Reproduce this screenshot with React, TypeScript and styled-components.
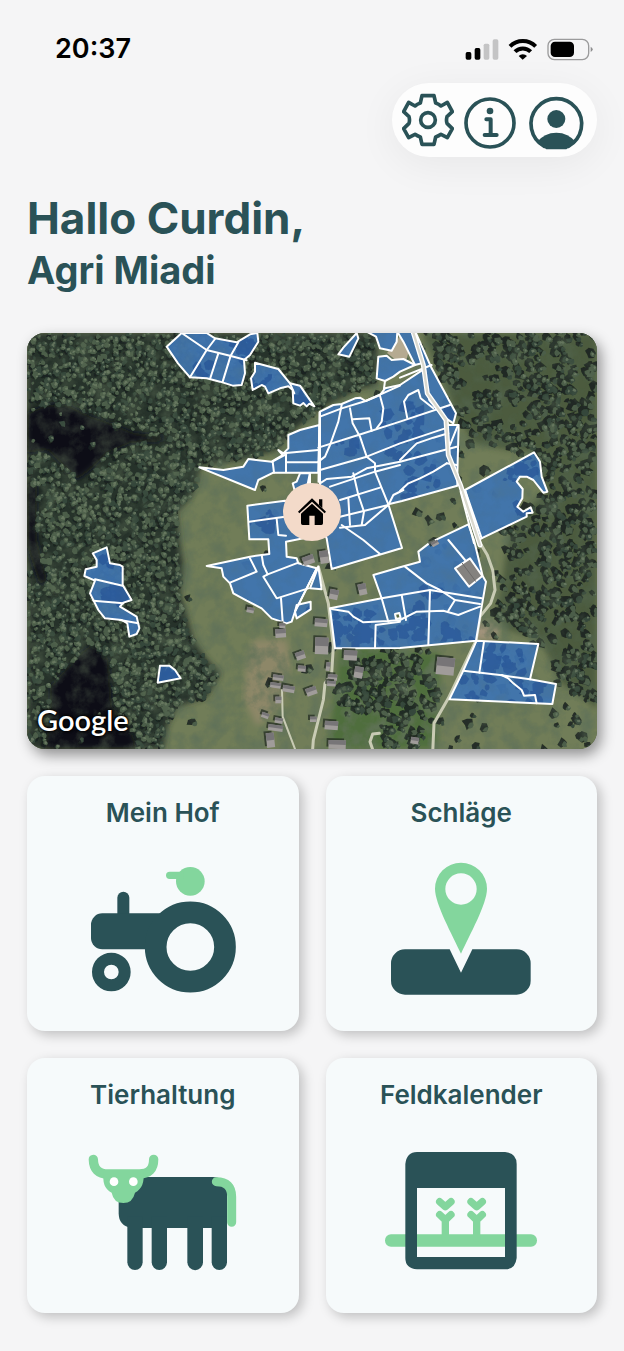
import React from 'react';
import styled, { createGlobalStyle } from 'styled-components';

const DARK = '#2a5257';
const MINT = '#83d69d';

const GlobalStyle = createGlobalStyle`
  *, *::before, *::after { box-sizing: border-box; }
  body {
    margin: 0;
    background: #f5f5f6;
    color: ${DARK};
    font-family: Inter, "Liberation Sans", sans-serif;
    -webkit-font-smoothing: antialiased;
  }
`;

const Screen = styled.div`
  display: flex;
  flex-direction: column;
  padding-bottom: 38px;
`;

const StatusBar = styled.div`
  display: flex;
  align-items: center;
  justify-content: space-between;
  height: 64px;
  padding: 34px 30px 0 55px;
  color: #000;
`;

const Clock = styled.time`
  font-size: 27px;
  line-height: 30px;
  font-weight: 600;
`;

const StatusIcons = styled.svg`
  width: 129px;
  height: 24px;
`;

const Header = styled.header`
  display: flex;
  justify-content: flex-end;
  padding: 19px 27px 0;
`;

const ActionPill = styled.nav`
  display: flex;
  align-items: center;
  gap: 10px;
  height: 74px;
  padding: 0 11px 0 10px;
  border-radius: 37px;
  background: #fdfdfd;
  box-shadow: 0 8px 40px rgba(0, 0, 0, 0.06);
`;

const IconButton = styled.button<{ $width: number }>`
  display: block;
  width: ${(p) => p.$width}px;
  height: 60px;
  padding: 0;
  border: 0;
  background: none;
  color: ${DARK};
  cursor: pointer;

  svg {
    display: block;
    width: 100%;
    height: 100%;
    fill: none;
    stroke: currentColor;
    stroke-width: 11;
    stroke-linejoin: round;
    stroke-linecap: round;
  }
`;

const Main = styled.main`
  display: flex;
  flex-direction: column;
  padding: 35px 27px 0;
`;

const Greeting = styled.h1`
  margin: 0;
  font-size: 44px;
  line-height: 52px;
  font-weight: 700;
`;

const FarmName = styled.p`
  margin: 0 0 37px;
  font-size: 38px;
  line-height: 52px;
  font-weight: 700;
`;

const MapCard = styled.section`
  border-radius: 18px;
  margin-bottom: 27px;
  box-shadow: 4px 6px 14px rgba(0, 0, 0, 0.42);
`;

const MapView = styled.div`
  position: relative;
  aspect-ratio: 570 / 416;
  border-radius: 18px;
  overflow: hidden;
  background: #37452f;
`;

const MapDrawing = styled.svg`
  display: block;
  width: 100%;
  height: 100%;
`;

const FarmMarker = styled.button`
  position: absolute;
  left: 50%;
  top: 43%;
  width: 58px;
  height: 58px;
  padding: 0;
  border: 0;
  border-radius: 50%;
  background: #f3dac9;
  transform: translate(-50%, -50%);
  cursor: pointer;

  svg {
    display: block;
    width: 58px;
    height: 58px;
  }
`;

const MapCredit = styled.span`
  position: absolute;
  left: 10px;
  bottom: 13px;
  color: #fff;
  font-family: Lato, "Liberation Sans", sans-serif;
  font-size: 29px;
  line-height: 32px;
  font-weight: 600;
  text-shadow: 0 0 3px #000, 0 0 3px #000, 0 0 4px #000;
`;

const Tiles = styled.nav`
  display: grid;
  grid-template-columns: 1fr 1fr;
  gap: 27px;
`;

const Tile = styled.a`
  display: flex;
  flex-direction: column;
  align-items: center;
  min-height: 255px;
  padding: 21px 12px 31px;
  border-radius: 18px;
  background: #f6fafb;
  color: inherit;
  text-decoration: none;
  box-shadow: 4px 4px 12px rgba(0, 0, 0, 0.22);
`;

const TileTitle = styled.h2`
  margin: 0 0 31px;
  font-size: 26px;
  line-height: 32px;
  font-weight: 600;
`;

const TileIcon = styled.svg`
  width: 153px;
  height: 140px;
`;

/* ---------- Map texture ---------- */

type Point = [number, number];

const seeded = (seed: number) => () => {
  seed = (seed * 1664525 + 1013904223) % 4294967296;
  return seed / 4294967296;
};

const inside = (x: number, y: number, poly: Point[]) => {
  let hit = false;
  for (let i = 0, j = poly.length - 1; i < poly.length; j = i++) {
    const [xi, yi] = poly[i];
    const [xj, yj] = poly[j];
    if (yi > y !== yj > y && x < ((xj - xi) * (y - yi)) / (yj - yi) + xi) hit = !hit;
  }
  return hit;
};

const toPoints = (poly: Point[]) => poly.map((p) => p.join(',')).join(' ');

const blob = (x: number, y: number, r: number, rand: () => number) => {
  const n = 7;
  let d = '';
  for (let i = 0; i < n; i++) {
    const a = (i / n) * Math.PI * 2;
    const k = r * (0.6 + rand() * 0.8);
    d += `${i ? 'L' : 'M'}${Math.round(x + Math.cos(a) * k)} ${Math.round(y + Math.sin(a) * k)}`;
  }
  return d + 'Z';
};

const WEST_FOREST: Point[] = [
  [0, 0], [1050, 0], [1049, 156], [999, 166], [879, 226], [784, 306], [749, 351], [659, 376],
  [519, 400], [510, 450], [489, 496], [449, 536], [455, 590], [459, 636], [470, 700], [459, 781],
  [480, 850], [499, 921], [540, 980], [579, 1021], [539, 1091], [449, 1121], [420, 1180],
  [409, 1248], [0, 1248],
];

const EAST_FOREST: Point[] = [
  [1185, 0], [1710, 0], [1710, 1130], [1650, 1080], [1599, 1051], [1570, 980], [1539, 921],
  [1440, 890], [1409, 840], [1425, 751], [1440, 640], [1459, 566], [1559, 476], [1519, 356],
  [1440, 350], [1340, 330], [1290, 250], [1250, 140],
];

const SOUTH_WOOD: Point[] = [
  [990, 990], [1100, 965], [1200, 980], [1230, 1040], [1240, 1100], [1200, 1180], [1190, 1248],
  [1080, 1248], [1060, 1130], [960, 1150], [920, 1080],
];

const RAVINES: Point[][] = [
  [[0, 240], [60, 215], [120, 215], [190, 250], [250, 270], [320, 300], [420, 310], [400, 325],
    [310, 330], [240, 360], [190, 410], [150, 440], [110, 400], [60, 350], [0, 360]],
  [[0, 450], [30, 460], [30, 620], [60, 740], [40, 760], [0, 640]],
  [[70, 1060], [160, 960], [200, 930], [245, 980], [255, 1120], [310, 1180], [330, 1248], [50, 1248], [70, 1160]],
];

/* Soft grassy openings between the eastern trees */
const CLEARINGS: [number, number, number][] = [
  [1310, 210, 60], [1380, 130, 45], [1450, 260, 50], [1680, 60, 50], [1420, 700, 45], [1600, 930, 60],
  [1520, 640, 35], [1660, 180, 35],
];

interface Woodland {
  shadow: string;
  deep: string;
  mid: string;
  light: string;
}

const growTrees = (): Woodland => {
  const rand = seeded(2037);
  const out: Woodland = { shadow: '', deep: '', mid: '', light: '' };
  const step = 15;
  for (let gy = 0; gy < 1248; gy += step) {
    for (let gx = 0; gx < 1710; gx += step) {
      const x = gx + rand() * step * 1.6;
      const y = gy + rand() * step * 1.6;
      const west = inside(x, y, WEST_FOREST);
      const east = !west && inside(x, y, EAST_FOREST);
      const south = !west && !east && inside(x, y, SOUTH_WOOD);
      const ravine = RAVINES.some((r) => inside(x, y, r));
      const open = CLEARINGS.some(([cx, cy, r]) => Math.hypot(x - cx, y - cy) < r);
      const chance = open ? 0.12 : ravine ? 0.02 : west ? 0.94 : east ? 0.5 : south ? 0.55 : x > 1130 ? 0.05 : 0.008;
      if (rand() > chance) continue;
      const r = 5 + rand() * 6;
      if (!west) out.shadow += blob(x - 7, y - 5, r * 1.5, rand);
      else if (rand() < 0.5) out.shadow += blob(x - 4, y + 6, r, rand);
      const tone = rand();
      if (tone < 0.45) out.deep += blob(x, y, r, rand);
      else out.mid += blob(x, y, r * 0.9, rand);
      if (rand() < (west ? 0.6 : 0.35)) out.light += blob(x + 2, y - 2, r * 0.45, rand);
    }
  }
  return out;
};

const TREES = growTrees();

/* Clusters of tree cover inside the fields: x, y, spread, count */
const SHADE: [number, number, number, number][] = [
  [640, 50, 50, 16], [690, 160, 50, 18], [800, 190, 40, 12], [520, 110, 30, 6], [1120, 260, 60, 22],
  [1130, 350, 50, 14], [960, 330, 40, 6], [1180, 440, 50, 16], [1270, 240, 20, 8], [1480, 410, 50, 20],
  [1490, 530, 20, 12], [980, 880, 60, 30], [1030, 920, 50, 18], [1150, 880, 50, 22], [1210, 800, 40, 8],
  [1290, 910, 50, 14], [1440, 980, 60, 22], [1350, 1060, 50, 14], [1500, 1080, 50, 12], [270, 780, 35, 16],
  [260, 790, 30, 14], [270, 690, 40, 10], [420, 1020, 30, 12], [850, 670, 30, 8], [700, 560, 40, 8],
  [1170, 520, 50, 12], [880, 830, 30, 8],
];

const growShade = () => {
  const rand = seeded(77);
  let d = '';
  SHADE.forEach(([cx, cy, spread, n]) => {
    for (let i = 0; i < n; i++) {
      d += blob(cx + (rand() - 0.5) * spread * 2, cy + (rand() - 0.5) * spread * 1.4, 6 + rand() * 12, rand);
    }
  });
  return d;
};

const SHADE_PATH = growShade();

/* ---------- Fields ---------- */

const NORTH_FIELDS = [
  'M-55 24L-100 65L-66 115L-30 157L20 160L60 170L98 182L125 180L135 145L132 105L150 90L175 50L172 24L150 28L110 52L45 40L20 24Z',
  'M165 113L235 132L270 175L300 182L343 244L328 236L320 244L310 234L300 242L280 235L278 195L265 184L240 190L205 205L195 185L185 180L158 195L153 160L165 140Z',
  'M470 24L475 40L448 95L415 88L430 68Z',
  'M500 20L528 35L540 70L575 77L590 50L592 20Z',
  'M535 95L560 92L575 105L610 102L645 120L600 140L580 155L555 168L530 160Z',
  'M592 20L640 20L665 115L645 120L625 80L610 50Z',
  'M646 20L695 130L768 265L760 295L730 275L688 225L675 150L660 90Z',
  'M360 260L400 240L425 237L465 220L480 218L497 228L540 210L555 190L600 180L675 130L682 205L735 280L745 300L776 300L772 448L772 482L606 528L565 538L606 669L395 732L380 640L360 600Z',
  'M358 300L300 315L265 330L265 370L250 385L235 375L248 390L215 410L145 402L130 425L70 435L-2 427L165 495L175 465L220 443L355 443Z',
  'M300 445L290 470L278 475L285 500L330 490L330 445Z',
  'M142 542L255 527L320 560L310 640L258 650L260 695L290 700L295 715L350 730L285 860L275 890L260 895L215 880L185 850L140 827L100 805L90 775L70 755L65 730L20 723L150 695L208 687L205 643L148 643Z',
  'M795 495L1002 382L1020 410L1025 455L1042 500L1030 503L1000 465L980 455L960 455L950 470L968 492L967 520L952 545L970 560L992 547L998 563L980 565L980 575L838 643Z',
  'M355 725L365 793L330 790Z',
  'M290 840L332 830L332 853L290 880L285 860Z',
];

const NORTH_LINES = [
  'M-55 24L20 75L90 92L140 106', 'M45 42L20 75L-30 157', 'M55 85L30 162', 'M115 52L92 92L68 170', 'M270 175L283 205',
  'M360 275L425 250L497 228L600 182', 'M425 240L415 290L390 360L375 395L355 410', 'M355 368L475 330L600 290L750 240',
  'M450 250L458 295L480 335L500 395L525 415L525 440L565 538', 'M458 283L508 280L515 318',
  'M540 212L550 250L545 290L530 310', 'M622 280L612 230L625 210L655 195L662 220L700 250', 'M360 435L500 395L600 355L742 308',
  'M600 405L625 380L650 355L700 338L745 325', 'M360 475L380 462L455 455L500 430L600 410L770 365', 'M390 485L525 440L600 420',
  'M600 498L625 475L660 460L700 440L740 415', 'M420 525L540 488', 'M460 445L475 510L492 560L485 600',
  'M420 575L565 540', 'M445 520L450 600', 'M420 608L495 600L565 540L580 510L610 495', 'M250 385L355 375', 'M258 412L355 412',
  'M258 388L258 440', 'M217 410L258 388', 'M218 410L222 443', 'M425 600L490 645L540 687', 'M148 590L255 575',
  'M230 582L235 630L258 632', 'M750 360L772 305', 'M555 168L552 190', 'M600 158L695 120',
  'M150 700L170 740L90 773', 'M185 690L190 720L203 748L295 713', 'M203 748L190 755L230 820L325 790', 'M243 820L248 890',
  'M350 730L285 860', 'M740 415L770 420',
];

const SOUTH_FIELDS = [
  'M390 205L545 175L520 105L600 82L660 65L655 35L690 8L805 -47L822 0L848 108L858 125L845 200L828 302L600 324L405 325Z',
  'M830 302L1015 312L990 418L1068 432L1057 492L748 478L790 392Z',
  'M-322 40L-280 22L-270 70L-240 75L-232 80L-232 135L-205 180L-230 188L-240 200L-190 230L-182 265L-190 282L-212 290L-218 250L-235 240L-285 235L-305 210L-330 160L-315 122L-347 108L-343 88L-310 80L-310 60Z',
  'M-120 377L-92 377L-75 390L-58 415L-127 428Z',
];

const SOUTH_LINES = [
  'M395 207L445 215L460 230L490 247L565 243L600 240L650 215L730 212L775 225L800 215L840 200', 'M545 175L565 245',
  'M525 325L527 255L600 245', 'M615 80L680 130L720 150L765 180L840 192', 'M545 175L690 150L845 175', 'M690 150L685 315',
  'M765 180L745 212', 'M605 165L618 240', 'M745 0L795 60', 'M852 305L838 398', 'M790 392L900 405L990 418',
  'M905 405L925 415L940 430L965 450L972 467L1005 465L1010 490', 'M-315 118L-232 137', 'M-320 182L-230 190', 'M-240 240L-185 250',
];

/* Village roofs: x, y, width, height, turn */
const ROOFS: [number, number, number, number, number][] = [
  [305, 54, 34, 26, -20], [357, 34, 26, 38, -8], [392, 146, 26, 30, 12], [472, 134, 24, 34, -12], [345, 235, 38, 24, 4],
  [225, 268, 32, 26, -4], [238, 250, 18, 14, 0], [346, 292, 40, 50, 2], [284, 340, 28, 24, -20], [294, 376, 24, 18, 4],
  [432, 330, 40, 30, 3], [466, 378, 26, 34, 10], [220, 403, 32, 16, 8], [212, 426, 32, 16, 8], [250, 434, 36, 20, 10],
  [315, 448, 32, 24, -20], [226, 470, 18, 20, 0], [384, 402, 28, 18, 4], [382, 422, 26, 16, 4], [380, 366, 12, 26, 8],
  [188, 515, 22, 16, 20], [206, 552, 44, 18, 8], [197, 580, 24, 44, -6], [330, 530, 20, 16, 0], [375, 542, 40, 26, 4],
  [386, 600, 52, 26, 2], [712, 350, 54, 52, 6], [634, 590, 24, 20, 10], [226, 532, 24, 16, 10], [692, 10, 22, 14, -30],
  [142, 200, 22, 16, 12], [312, -14, 34, 16, -6],
];

const AerialMap = () => (
  <MapDrawing viewBox="0 0 1710 1248" preserveAspectRatio="xMidYMid slice" aria-hidden="true">
    <defs>
      <filter id="ground" x="0" y="0" width="100%" height="100%">
        <feTurbulence type="fractalNoise" baseFrequency="0.02" numOctaves="5" seed="4" />
        <feColorMatrix values="0 0 0 0 0.12  0 0 0 0 0.17  0 0 0 0 0.1  1.9 0 0 0 -0.76" />
      </filter>
      <filter id="edge" x="-5%" y="-5%" width="110%" height="110%">
        <feGaussianBlur stdDeviation="9" />
      </filter>
      <filter id="canopy" x="0" y="0" width="100%" height="100%">
        <feGaussianBlur stdDeviation="1.4" />
      </filter>
      <clipPath id="fields">
        {NORTH_FIELDS.map((d) => <path key={d} d={d} transform="translate(519 -24)" />)}
        {SOUTH_FIELDS.map((d) => <path key={d} d={d} transform="translate(519 621)" />)}
      </clipPath>
    </defs>

    <rect width="1710" height="1248" fill="#717d58" />
    <path d="M680 920L780 920L790 1000L760 1120L690 1180L650 1100L660 980Z" fill="#8d8768" filter="url(#edge)" />
    <path d="M940 940L1240 960L1230 1248L900 1248Z" fill="#4f6e3e" filter="url(#edge)" />
    <path d="M1340 860L1420 870L1410 920L1340 920Z" fill="#a0937a" filter="url(#edge)" />
    <rect width="1710" height="1248" filter="url(#ground)" />

    <polygon points={toPoints(WEST_FOREST)} fill="#26322a" filter="url(#edge)" />
    <polygon points={toPoints(EAST_FOREST)} fill="#2f402c" opacity="0.55" filter="url(#edge)" />
    {RAVINES.map((r, i) => (
      <polygon key={i} points={toPoints(r)} fill="#0f1119" filter="url(#edge)" />
    ))}
    <g filter="url(#canopy)">
      <path d={TREES.shadow} fill="#17211c" opacity="0.85" />
      <path d={TREES.deep} fill="#35463a" />
      <path d={TREES.mid} fill="#4b5d48" />
      <path d={TREES.light} fill="#72826a" opacity="0.75" />
    </g>
    <rect width="1710" height="1248" filter="url(#ground)" opacity="0.5" />

    <g fill="none" stroke="#c9cbb4" strokeLinejoin="round" strokeLinecap="round">
      <g transform="translate(519 621)" strokeWidth="9">
        <path d="M355 80L385 190L400 320L395 400L375 430L370 480L340 600L337 640" />
        <path d="M246 450L248 530L290 640" strokeWidth="6" />
        <path d="M538 580L518 582L510 605L522 640" />
        <path d="M835 0L862 45L878 90L885 150L872 190L840 230L828 302L745 475L702 550L698 640" />
      </g>
    </g>
    <path d="M1080 60L1119 10L1144 60L1138 80L1110 84Z" fill="#b5aa91" />

    <g fill="#3e74b1" fillOpacity="0.93">
      <g transform="translate(519 -24)">{NORTH_FIELDS.map((d) => <path key={d} d={d} />)}</g>
      <g transform="translate(519 621)">{SOUTH_FIELDS.map((d) => <path key={d} d={d} />)}</g>
    </g>
    <g clipPath="url(#fields)">
      <rect width="1710" height="1248" filter="url(#ground)" opacity="0.16" />
      <path d={SHADE_PATH} fill="#1c4a90" opacity="0.5" filter="url(#canopy)" />
    </g>

    <g fill="none" stroke="#fff" strokeWidth="6" strokeLinejoin="round" strokeLinecap="round">
      <g transform="translate(519 -24)">
        {[...NORTH_FIELDS, ...NORTH_LINES].map((d) => <path key={d} d={d} />)}
        <path d="M359 262L356 470M330 445L322 485" strokeWidth="7" />
        <path d="M636 10L670 120L682 205L738 285L745 390L782 482L840 660" strokeWidth="15" />
        <path d="M636 10L670 120L682 205L738 285L745 390L782 482L840 660" stroke="#dad9cf" strokeWidth="7" />
        <path d="M795 495L845 640M782 500L822 655" />
      </g>
      <g transform="translate(519 621)">
        {[...SOUTH_FIELDS, ...SOUTH_LINES].map((d) => <path key={d} d={d} />)}
        <path d="M765 85L810 55L847 108L807 140Z" fill="#84827f" />
        <path d="M787 70L827 124" stroke="#6c6a68" strokeWidth="3" />
        <path d="M585 222L598 219L602 234L588 237Z" fill="#5e6d45" />
      </g>
    </g>

    <g transform="translate(519 621)">
      {ROOFS.map(([x, y, w, h, turn]) => (
        <g key={`${x}-${y}`} transform={`rotate(${turn} ${x} ${y})`}>
          <rect x={x - 6} y={y - 6} width={w} height={h} fill="#20281f" opacity="0.7" />
          <rect x={x} y={y} width={w} height={h} fill="#a09c9a" />
          <rect x={x} y={y} width={w} height={h / 2} fill="#777577" />
        </g>
      ))}
    </g>
  </MapDrawing>
);

/* ---------- Icons ---------- */

const StatusGlyphs = () => (
  <StatusIcons viewBox="255 50 387 72" aria-hidden="true">
    <rect x="257" y="95" width="17" height="23" rx="5" />
    <rect x="284" y="83" width="17" height="35" rx="5" />
    <rect x="311" y="70" width="17" height="48" rx="5" fill="#c4c4c5" />
    <rect x="338" y="57" width="17" height="61" rx="5" fill="#c4c4c5" />
    <path d="M390 78A55 55 0 0 1 467 78" fill="none" stroke="#000" strokeWidth="12" />
    <path d="M405 94A33 33 0 0 1 452 94" fill="none" stroke="#000" strokeWidth="12" />
    <path d="M416 107A17 17 0 0 1 441 107L428 118Z" />
    <rect x="504" y="57" width="122" height="61" rx="19" fill="none" stroke="#9b9b9c" strokeWidth="4" />
    <rect x="512" y="64" width="70" height="46" rx="13" />
    <path d="M632 79Q638 82 638 87Q638 92 632 95Z" fill="#8e8e8f" />
  </StatusIcons>
);

const GearIcon = () => (
  <svg viewBox="67 210 156 180" aria-hidden="true">
    <path d="M127 227H163L168 249Q177 252 184 258L203 247L218 275L202 290Q199 300 202 310L218 326L203 353L184 343Q177 348 168 351L163 373H127L122 351Q113 348 106 343L87 353L72 326L88 310Q91 300 88 290L72 275L87 247L106 258Q113 252 122 249Z" />
    <circle cx="145" cy="300" r="22" />
  </svg>
);

const InfoIcon = () => (
  <svg viewBox="251 210 156 180" aria-hidden="true">
    <circle cx="329" cy="309" r="72" />
    <circle cx="329" cy="273" r="10" fill="currentColor" stroke="none" />
    <path d="M318 298H331V345M313 345H349" strokeWidth="12" />
  </svg>
);

const ProfileIcon = () => (
  <svg viewBox="441 210 180 180" aria-hidden="true">
    <path d="M496 379A76 76 0 1 1 568 379" />
    <circle cx="532" cy="297" r="27" fill="currentColor" stroke="none" />
    <path d="M473 367Q496 338 532 338Q568 338 591 367L562 388H502Z" fill="currentColor" stroke="none" />
  </svg>
);

const HouseIcon = () => (
  <svg viewBox="249 474 174 174" aria-hidden="true">
    <path d="M336 520L378 560L374 565L336 530L298 565L294 560Z" />
    <path d="M357 523H367V549L357 540Z" />
    <path d="M336 536L369 566V595Q369 600 364 600H344V572H328V600H308Q303 600 303 595V566Z" />
  </svg>
);

const TractorIcon = () => (
  <TileIcon viewBox="198 270 459 420" aria-hidden="true">
    <g fill={MINT}>
      <circle cx="511" cy="334" r="43" />
      <path d="M449 305H490V327H449A11 11 0 0 1 449 305Z" />
    </g>
    <path d="M292 440V383A18 18 0 0 1 328 383V440Z" fill={DARK} />
    <rect x="213" y="430" width="260" height="108" rx="34" fill={DARK} />
    <circle cx="511" cy="531" r="104" fill="#f6fafb" stroke={DARK} strokeWidth="65" />
    <circle cx="274" cy="606" r="40" fill="none" stroke={DARK} strokeWidth="36" />
  </TileIcon>
);

const PinIcon = () => (
  <TileIcon viewBox="195 270 459 420" aria-hidden="true">
    <path
      d="M255 538H389L423 608L457 538H590A42 42 0 0 1 632 580V632A42 42 0 0 1 590 674H255A42 42 0 0 1 213 632V580A42 42 0 0 1 255 538Z"
      fill={DARK}
    />
    <path
      fillRule="evenodd"
      d="M423 551C397 494 345 402 345 356A78 78 0 0 1 501 356C501 402 449 494 423 551ZM423 310A47 47 0 1 0 423 404A47 47 0 1 0 423 310Z"
      fill={MINT}
    />
  </TileIcon>
);

const CowIcon = () => (
  <TileIcon viewBox="198 276 459 420" aria-hidden="true">
    <g fill={DARK}>
      <path d="M340 381H577Q621 381 621 430V534H335Q296 528 296 490V420Z" />
      <path d="M322 500H368V637A23 23 0 0 1 322 637Z" />
      <path d="M395 500H441V637A23 23 0 0 1 395 637Z" />
      <path d="M502 500H549V637A23 23 0 0 1 502 637Z" />
      <path d="M575 500H621V637A23 23 0 0 1 575 637Z" />
    </g>
    <path d="M589 395Q635 395 635 440V517" fill="none" stroke={MINT} strokeWidth="27" strokeLinecap="round" />
    <path d="M220 328Q221 372 264 372H358Q401 372 401 328" fill="none" stroke={MINT} strokeWidth="28" strokeLinecap="round" />
    <path d="M252 366H370Q376 412 345 428Q338 459 310 459Q281 459 275 428Q243 412 252 366Z" fill={MINT} />
    <circle cx="282" cy="395" r="13" fill="#fff" />
    <circle cx="340" cy="395" r="13" fill="#fff" />
  </TileIcon>
);

const CalendarIcon = () => (
  <TileIcon viewBox="195 276 459 420" aria-hidden="true">
    <rect x="195" y="553" width="456" height="37" rx="18" fill={MINT} />
    <path
      fillRule="evenodd"
      d="M291 306H555Q590 309 590 342V624Q586 658 555 658H291Q256 655 256 624V342Q260 306 291 306ZM291 414V621H555V414Z"
      fill={DARK}
    />
    <g fill="none" stroke={MINT} strokeWidth="22" strokeLinecap="round" strokeLinejoin="round">
      {[376, 470].map((x) => (
        <g key={x}>
          <path d={`M${x - 17} 455L${x} 470L${x + 17} 455`} />
          <path d={`M${x - 17} 494L${x} 510L${x + 17} 494M${x} 510V565`} />
        </g>
      ))}
    </g>
  </TileIcon>
);

/* ---------- Page ---------- */

const TILES = [
  { title: 'Mein Hof', href: '#hof', Icon: TractorIcon },
  { title: 'Schläge', href: '#schlaege', Icon: PinIcon },
  { title: 'Tierhaltung', href: '#tierhaltung', Icon: CowIcon },
  { title: 'Feldkalender', href: '#feldkalender', Icon: CalendarIcon },
];

export default function App() {
  return (
    <Screen>
      <GlobalStyle />
      <StatusBar>
        <Clock>20:37</Clock>
        <StatusGlyphs />
      </StatusBar>
      <Header>
        <ActionPill>
          <IconButton type="button" $width={52} aria-label="Einstellungen"><GearIcon /></IconButton>
          <IconButton type="button" $width={52} aria-label="Info"><InfoIcon /></IconButton>
          <IconButton type="button" $width={60} aria-label="Profil"><ProfileIcon /></IconButton>
        </ActionPill>
      </Header>
      <Main>
        <Greeting>Hallo Curdin,</Greeting>
        <FarmName>Agri Miadi</FarmName>
        <MapCard>
          <MapView>
            <AerialMap />
            <FarmMarker type="button" aria-label="Hof"><HouseIcon /></FarmMarker>
            <MapCredit>Google</MapCredit>
          </MapView>
        </MapCard>
        <Tiles>
          {TILES.map(({ title, href, Icon }) => (
            <Tile key={title} href={href}>
              <TileTitle>{title}</TileTitle>
              <Icon />
            </Tile>
          ))}
        </Tiles>
      </Main>
    </Screen>
  );
}
